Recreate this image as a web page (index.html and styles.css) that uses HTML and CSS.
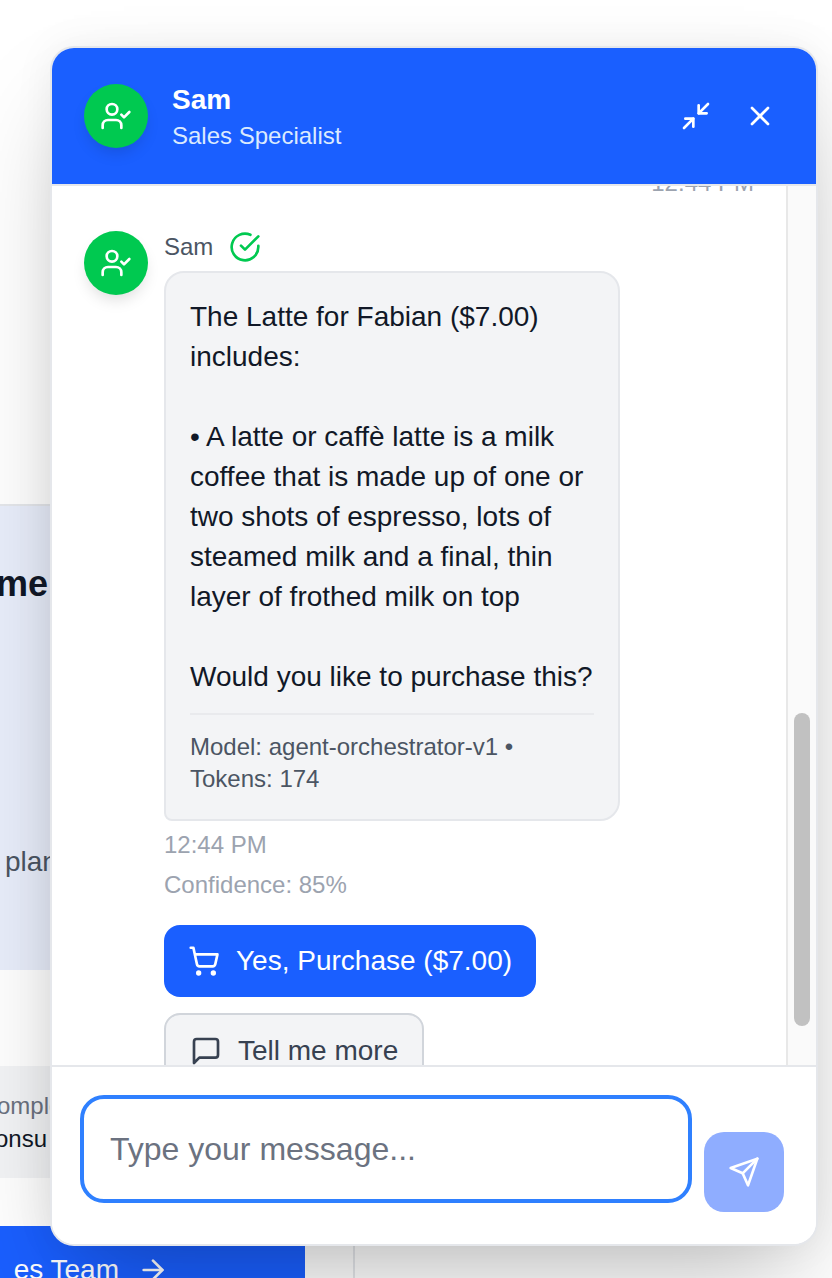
FILE: index.html
```html
<!DOCTYPE html>
<html lang="en">
<head>
<meta charset="utf-8">
<title>Sam chat</title>
<link rel="stylesheet" href="styles.css">
</head>
<body>
<main class="page">
  <div class="sheet">
    <section class="hero">
      <h2 class="hero-title">me</h2>
      <p class="hero-text">plan</p>
    </section>
    <section class="consult">
      <p class="consult-label">omple</p>
      <p class="consult-value">onsu</p>
    </section>
    <a class="cta">es Team
      <svg class="icon" viewBox="0 0 24 24"><path d="M5 12h14"/><path d="m12 5 7 7-7 7"/></svg>
    </a>
  </div>
</main>

<aside class="widget">
  <header class="head">
    <div class="avatar">
      <svg class="icon" viewBox="0 0 24 24"><path d="M16 21v-2a4 4 0 0 0-4-4H6a4 4 0 0 0-4 4v2"/><circle cx="9" cy="7" r="4"/><polyline points="16 11 18 13 22 9"/></svg>
    </div>
    <div class="head-text">
      <div class="head-name">Sam</div>
      <div class="head-role">Sales Specialist</div>
    </div>
    <div class="head-actions">
      <button class="head-btn"><svg class="icon" viewBox="0 0 24 24"><path d="M4 14h6v6"/><path d="M20 10h-6V4"/><path d="m14 10 7-7"/><path d="m3 21 7-7"/></svg></button>
      <button class="head-btn"><svg class="icon" viewBox="0 0 24 24"><path d="M18 6 6 18"/><path d="m6 6 12 12"/></svg></button>
    </div>
  </header>

  <div class="body">
    <div class="messages">
      <div class="prev-time">12:44 PM</div>
      <div class="msg">
        <div class="avatar">
          <svg class="icon" viewBox="0 0 24 24"><path d="M16 21v-2a4 4 0 0 0-4-4H6a4 4 0 0 0-4 4v2"/><circle cx="9" cy="7" r="4"/><polyline points="16 11 18 13 22 9"/></svg>
        </div>
        <div class="msg-col">
          <div class="msg-name">Sam
            <svg class="icon check" viewBox="0 0 24 24"><path d="M22 11.08V12a10 10 0 1 1-5.93-9.14"/><polyline points="22 4 12 14.01 9 11.01"/></svg>
          </div>
          <div class="bubble">
            <p class="bubble-text">The Latte for Fabian ($7.00) includes:

• A latte or caffè latte is a milk coffee that is made up of one or two shots of espresso, lots of steamed milk and a final, thin layer of frothed milk on top

Would you like to purchase this?</p>
            <p class="bubble-meta">Model: agent-orchestrator-v1 • Tokens: 174</p>
          </div>
          <div class="stamp">12:44 PM</div>
          <div class="stamp">Confidence: 85%</div>
          <button class="btn btn-primary">
            <svg class="icon" viewBox="0 0 24 24"><circle cx="8" cy="21" r="1"/><circle cx="19" cy="21" r="1"/><path d="M2.05 2.05h2l2.66 12.42a2 2 0 0 0 2 1.58h9.78a2 2 0 0 0 1.95-1.57l1.65-7.43H5.12"/></svg>
            Yes, Purchase ($7.00)
          </button>
          <button class="btn btn-secondary">
            <svg class="icon" viewBox="0 0 24 24"><path d="M21 15a2 2 0 0 1-2 2H7l-4 4V5a2 2 0 0 1 2-2h14a2 2 0 0 1 2 2z"/></svg>
            Tell me more
          </button>
        </div>
      </div>
    </div>
    <div class="track"><div class="thumb"></div></div>
  </div>

  <footer class="foot">
    <input class="field" type="text" placeholder="Type your message...">
    <button class="send">
      <svg class="icon" viewBox="0 0 24 24"><path d="m22 2-7 20-4-9-9-4Z"/><path d="M22 2 11 13"/></svg>
    </button>
  </footer>
</aside>
</body>
</html>
```

FILE: styles.css
```css
* { box-sizing: border-box; }

html, body {
  margin: 0;
  height: 1278px;
  overflow: hidden;
  background: #ffffff;
  font-family: "Liberation Sans", Arial, sans-serif;
}

p, h2 { margin: 0; }

.icon {
  width: 32px;
  height: 32px;
  flex: none;
  fill: none;
  stroke: currentColor;
  stroke-width: 2;
  stroke-linecap: round;
  stroke-linejoin: round;
}

/* page behind the widget */
.page {
  width: 355px;
  height: 1278px;
  padding-top: 504px;
  overflow: hidden;
}

.sheet {
  height: 774px;
  border-right: 2px solid #e5e7eb;
}

.hero {
  height: 466px;
  border-top: 2px solid #e5e7eb;
  background: #e9eefb;
  padding-top: 58px;
}

.hero-title {
  margin-left: -4px;
  font-size: 36px;
  line-height: 40px;
  font-weight: 700;
  color: #111827;
}

.hero-text {
  margin-top: 238px;
  padding-left: 5px;
  font-size: 28px;
  line-height: 40px;
  color: #4b5563;
}

.consult {
  margin-top: 96px;
  height: 112px;
  padding-top: 24px;
  background: #f3f4f6;
  white-space: nowrap;
}

.consult-label {
  margin-left: -3px;
  font-size: 24px;
  line-height: 32px;
  color: #6b7280;
}

.consult-value {
  margin-left: -5px;
  font-size: 24px;
  line-height: 34px;
  color: #111827;
}

.cta {
  display: flex;
  align-items: center;
  justify-content: flex-end;
  gap: 18px;
  width: 305px;
  height: 72px;
  margin-top: 48px;
  padding: 16px 136px 0 0;
  background: #1a5fff;
  color: #ffffff;
  font-size: 28px;
  white-space: nowrap;
}

/* chat widget */
.widget {
  position: absolute;
  top: 46px;
  right: 14px;
  width: 768px;
  height: 1200px;
  display: flex;
  flex-direction: column;
  background: #ffffff;
  border: 2px solid #e5e7eb;
  border-radius: 24px;
  overflow: hidden;
  box-shadow: 0 50px 100px -24px rgba(0, 0, 0, 0.25), 0 0 40px rgba(0, 0, 0, 0.06);
}

.head {
  display: flex;
  align-items: center;
  gap: 24px;
  height: 138px;
  flex: none;
  padding: 0 32px;
  background: #1a5fff;
  border-bottom: 2px solid #e5e7eb;
  color: #ffffff;
}

.avatar {
  width: 64px;
  height: 64px;
  flex: none;
  display: flex;
  align-items: center;
  justify-content: center;
  border-radius: 50%;
  background: #00c950;
  color: #ffffff;
  box-shadow: 0 8px 16px -4px rgba(0, 0, 0, 0.15);
}

.head-text { flex: 1; }

.head-name {
  font-size: 28px;
  line-height: 40px;
  font-weight: 700;
}

.head-role {
  font-size: 24px;
  line-height: 32px;
  color: #dbeafe;
}

.head-actions { display: flex; gap: 16px; }

.head-btn {
  display: flex;
  padding: 8px;
  border: 0;
  background: none;
  color: #ffffff;
}

.body {
  flex: 1;
  min-height: 0;
  display: flex;
}

.messages {
  flex: 1;
  min-width: 0;
  overflow: hidden;
  padding: 0 32px;
}

.prev-time {
  margin-top: -19px;
  text-align: right;
  font-size: 24px;
  line-height: 32px;
  color: #9ca3af;
}

.msg {
  display: flex;
  gap: 16px;
  margin-top: 32px;
}

.msg-col {
  display: flex;
  flex-direction: column;
  align-items: flex-start;
}

.msg-name {
  display: flex;
  align-items: center;
  gap: 16px;
  font-size: 24px;
  line-height: 32px;
  color: #4b5563;
}

.check { color: #00c950; }

.bubble {
  width: 456px;
  margin-top: 8px;
  padding: 24px;
  background: #f3f4f6;
  border: 2px solid #e5e7eb;
  border-radius: 20px 20px 20px 8px;
}

.bubble-text {
  font-size: 28px;
  line-height: 40px;
  color: #111827;
  white-space: pre-line;
}

.bubble-meta {
  margin-top: 16px;
  padding-top: 16px;
  border-top: 2px solid #e9eaed;
  font-size: 24px;
  line-height: 32px;
  color: #4b5563;
}

.stamp {
  margin-top: 8px;
  font-size: 24px;
  line-height: 32px;
  color: #9ca3af;
}

.btn {
  display: flex;
  align-items: center;
  gap: 16px;
  height: 72px;
  padding: 0 24px;
  border-radius: 16px;
  font-family: inherit;
  font-size: 28px;
  white-space: nowrap;
}

.btn-primary {
  margin-top: 24px;
  border: 0;
  background: #1a5fff;
  color: #ffffff;
}

.btn-secondary {
  height: 76px;
  margin-top: 16px;
  flex: none;
  border: 2px solid #d1d5db;
  background: #f3f4f6;
  color: #374151;
}

.track {
  width: 30px;
  flex: none;
  padding: 527px 6px 0;
  background: #fafafa;
  border-left: 2px solid #e8e8e8;
}

.thumb {
  width: 16px;
  height: 313px;
  border-radius: 8px;
  background: #c1c1c1;
}

.foot {
  display: flex;
  align-items: flex-end;
  gap: 12px;
  height: 179px;
  flex: none;
  padding: 28px 32px 32px 28px;
  background: #ffffff;
  border-top: 2px solid #e5e7eb;
}

.field {
  flex: 1;
  min-width: 0;
  height: 108px;
  margin-bottom: 9px;
  padding: 0 26px;
  border: 4px solid #2f80ff;
  border-radius: 24px;
  outline: none;
  font-family: inherit;
  font-size: 32px;
  color: #111827;
}

.field::placeholder { color: #6b7280; opacity: 1; }

.send {
  width: 80px;
  height: 80px;
  flex: none;
  display: flex;
  align-items: center;
  justify-content: center;
  border: 0;
  border-radius: 20px;
  background: #8fadff;
  color: #ffffff;
}
```
